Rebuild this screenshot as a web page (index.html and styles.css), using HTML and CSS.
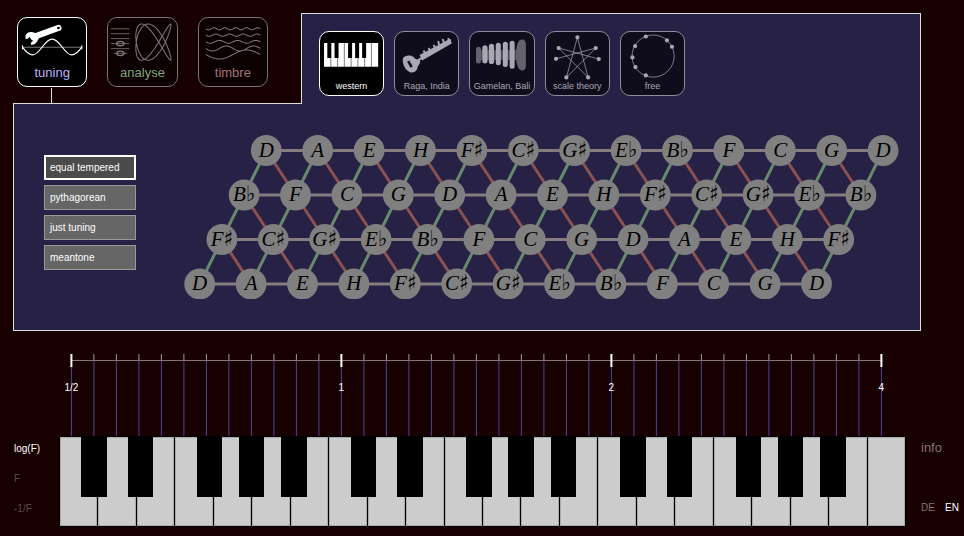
FILE: index.html
```html
<!DOCTYPE html>
<html lang="en">
<head>
<meta charset="utf-8">
<meta name="viewport" content="width=device-width, initial-scale=1">
<title>tuning</title>
<link rel="stylesheet" href="styles.css">
</head>
<body>
<main class="panel">
  <header class="panel-head">
    <nav class="modes">
      <button type="button" class="tile tile-tuning is-active">
        <svg viewBox="1 1 68 68" aria-hidden="true">
          <path d="M5.500 30H64.500" stroke="#777" fill="none"/>
          <path d="M5.500 28v4M64.500 28v4" stroke="#fff" fill="none"/>
          <path d="M5.500 30C9 35 12 37.700 15.700 37.700C23 37.700 27 22 35 22C43 22 47 37.700 54.300 37.700C58 37.700 61 35 64.500 30" stroke="#fff" stroke-width="1.200" fill="none"/>
          <path d="M16 20L41.300 10.900" stroke="#fff" stroke-width="6" stroke-linecap="round"/>
          <path d="M8.300 19.500C9 16 12 14.600 15 15L20 16.500L22 21C20.500 23 20 26 17 27.300L13.800 27.600L14 25.500L15.800 23.800L15.500 20.800L12.600 19.800L10.600 21.600L8.600 21.800Z" fill="#fff"/>
          <path d="M41 11l.600-.300" stroke="#000" stroke-width="2.400" stroke-linecap="round"/>
        </svg>
        <span>tuning</span>
      </button>
      <button type="button" class="tile tile-analyse">
        <svg viewBox="1 1 68 68" aria-hidden="true" fill="none" stroke="currentColor">
          <path d="M4 11.700H22.300M4 16.700H22.300M4 21.500H22.300M4 26.500H22.300M4 31.500H22.300M6.700 36.200H20.300" stroke-width=".8"/>
          <ellipse cx="13.300" cy="26.400" rx="3.600" ry="2.200" stroke-width="1.300"/>
          <ellipse cx="13.300" cy="36.200" rx="3.600" ry="2.200" stroke-width="1.300"/>
          <path id="lissajous"/>
        </svg>
        <span>analyse</span>
      </button>
      <button type="button" class="tile tile-timbre">
        <svg viewBox="1 1 68 68" aria-hidden="true" fill="none" stroke="currentColor">
          <path id="harmonics"/>
        </svg>
        <span>timbre</span>
      </button>
    </nav>
    <nav class="systems">
      <button type="button" class="tile is-active">
        <svg viewBox="1 1 63 63" aria-hidden="true">
          <path d="M5 12H59V35.700H5Z" fill="#fff"/>
          <path d="M11.750 27v9M18.500 27v9M25.250 12v24M32 27v9M38.750 27v9M45.500 27v9M52.250 12v24" stroke="#000" stroke-width=".5"/>
          <path d="M8.300 12h4v15h-4zM15.500 12h4v15h-4zM29 12h4v15h-4zM36 12h4v15h-4zM43 12h4v15h-4z"/>
        </svg>
        <span>western</span>
      </button>
      <button type="button" class="tile">
        <svg viewBox="1 1 63 63" aria-hidden="true">
          <path d="M25.500 24L53.500 9L56.500 8L57.500 12.500L28 29.500Z" fill="currentColor"/>
          <path d="M31 22.500l-1.500-3M36 20l-1.500-3M41 17l-1.500-3M45 14l-1-4M50 12l-1.500-4M55 10l-1-3" stroke="currentColor" stroke-width="2"/>
          <path d="M9 27C11 24 17 23.500 20 26.500C21.500 28.500 23 28.500 25.500 28.500C27 31 25 34 23.500 36C23.500 40 19 43 15 40.500C10 38 8 31 9 27Z" fill="currentColor"/>
          <path d="M24 29L30 25.500" stroke="currentColor" stroke-width="2"/>
          <path d="M14.200 30l3.400 6" stroke="#0f0d1c" stroke-width="2.600"/>
        </svg>
        <span>Raga, India</span>
      </button>
      <button type="button" class="tile">
        <svg viewBox="1 1 63 63" aria-hidden="true" fill="currentColor">
          <path d="M10 19H50V29H10Z" opacity=".4"/>
          <rect x="7" y="15.700" width="5" height="16.600" rx="2.500" fill="#65616d"/>
          <rect x="13.300" y="14.300" width="5.200" height="18" rx="2.600"/>
          <rect x="19.800" y="12.700" width="5.200" height="20.300" rx="2.600"/>
          <rect x="26.700" y="11.700" width="5" height="22.500" rx="2.500"/>
          <rect x="33.700" y="10.700" width="5" height="25.300" rx="2.500"/>
          <rect x="40.500" y="9.700" width="5" height="28" rx="2.500"/>
          <path d="M47 19C48 12 49 9 53 8.500C56 8.500 56.700 11 56.700 14V34C56.700 37 56 39.500 53 39.500C49 39 48 35 47 29Z" fill="#65616d"/>
        </svg>
        <span>Gamelan, Bali</span>
      </button>
      <button type="button" class="tile">
        <svg viewBox="1 1 63 63" aria-hidden="true">
          <path d="M21.300 46.300L32.300 6.300L43 46.300L13.600 17L53.600 28M11 27.700L50.600 17L21.300 46.300" stroke="currentColor" stroke-width=".7" fill="none"/>
          <path d="M32.300 6.300h0M50.600 17h0M53.600 28h0M43 46.300h0M21.300 46.300h0M11 27.700h0M13.600 17h0" stroke="currentColor" stroke-width="4.200" stroke-linecap="round"/>
        </svg>
        <span>scale theory</span>
      </button>
      <button type="button" class="tile">
        <svg viewBox="1 1 63 63" aria-hidden="true">
          <circle cx="33" cy="25" r="21" stroke="currentColor" stroke-width=".7" fill="none"/>
          <path d="M25.800 5.500h0M46.800 9.300h0M51.800 15.700h0M15.100 15h0M12.400 26.300h0M15.400 36h0M25.800 44.300h0" stroke="currentColor" stroke-width="4.200" stroke-linecap="round"/>
        </svg>
        <span>free</span>
      </button>
    </nav>
  </header>
  <section class="panel-body">
    <div class="temperaments">
      <button type="button" class="is-active">equal tempered</button>
      <button type="button">pythagorean</button>
      <button type="button">just tuning</button>
      <button type="button">meantone</button>
    </div>
    <svg class="tonnetz" id="tonnetz" viewBox="0 0 715 164" role="img" aria-label="Tone network"></svg>
  </section>
</main>
<section class="stage">
  <svg class="ruler" id="ruler" viewBox="0 0 847 82" role="img" aria-label="Frequency ratios"></svg>
  <div class="axis-modes">
    <button type="button" class="is-active">log(F)</button>
    <button type="button">F</button>
    <button type="button">-1/F</button>
  </div>
  <div class="keyboard" id="keyboard"></div>
  <div class="meta">
    <a class="info" href="#info">info</a>
    <div class="languages">
      <a href="#de">DE</a>
      <a class="is-active" href="#en">EN</a>
    </div>
  </div>
</section>
<script src="script.js"></script>
</body>
</html>
```
FILE: styles.css
```css
* {
  box-sizing: border-box;
}

body {
  margin: 0;
  min-height: 100vh;
  background: #180000;
  color: #fff;
  font-family: "Liberation Sans", Arial, sans-serif;
  font-size: 10px;
}

button {
  margin: 0;
  padding: 0;
  border: 0;
  background: none;
  color: inherit;
  font: inherit;
  cursor: pointer;
}

a {
  color: inherit;
  text-decoration: none;
}

.panel {
  padding: 13px 43px 0 13px;
}

.panel-head {
  display: flex;
}

.modes {
  display: grid;
  grid-template-columns: repeat(3, 1fr);
  align-items: start;
  gap: 20px;
  width: 288px;
  padding: 4px 33px 0 4px;
  border-bottom: 1px solid #ddd;
}

.systems {
  flex: 1;
  display: grid;
  grid-template-columns: repeat(5, minmax(0, 73px));
  align-items: start;
  gap: 10px;
  padding: 17px 235px 8px 17px;
  border: 1px solid #ddd;
  border-bottom: 0;
  background: #262145;
}

.tile {
  display: grid;
  position: relative;
  aspect-ratio: 1;
  border: 1px solid #7d7077;
  border-radius: 10px;
  background: #0c0000;
  color: #857777;
}

.tile > * {
  grid-area: 1 / 1;
}

.tile > svg {
  width: 100%;
  height: 100%;
}

.tile > span {
  align-self: end;
  text-align: center;
  white-space: nowrap;
}

.modes .tile {
  font-size: 13px;
}

.modes .tile > span {
  line-height: 14px;
  padding-bottom: 6px;
}

.tile-tuning > span {
  color: #b9b3ff;
}

.tile-analyse > span {
  color: #7fa57b;
}

.tile-timbre > span {
  color: #a57575;
}

.systems .tile {
  border-color: #8f8c9b;
  background: #0f0d1c;
  color: #aaa7b5;
  font-size: 9px;
}

.systems .tile > span {
  line-height: 10px;
  padding-bottom: 4px;
}

.modes .is-active,
.systems .is-active {
  border-color: #fff;
  background: #000;
  color: #fff;
}

.modes .is-active::after {
  content: "";
  position: absolute;
  top: calc(100% + 2px);
  left: calc(50% - 1px);
  width: 1px;
  height: 15px;
  background: #ddd;
}

.panel-body {
  display: flex;
  align-items: flex-start;
  gap: 48px;
  padding: 31px 21px 31px 30px;
  border: 1px solid #ddd;
  border-top: 0;
  background: #262145;
}

.temperaments {
  display: grid;
  gap: 5px;
  width: 92px;
  padding-top: 20px;
}

.temperaments button {
  height: 25px;
  padding-left: 5px;
  border: 1px solid #999;
  background: #666;
  text-align: left;
}

.temperaments .is-active {
  padding-left: 4px;
  border: 2px solid #fff;
  background: #4b4b4b;
}

.tonnetz {
  flex: 1;
  min-width: 0;
}

.edge {
  stroke-width: 3;
}

.edge-fifth {
  stroke: #857c80;
}

.edge-major {
  stroke: #69896d;
}

.edge-minor {
  stroke: #8c5252;
}

.node {
  fill: #808080;
}

.note {
  fill: #000;
  font-family: "Liberation Serif", "Times New Roman", serif;
  font-size: 21px;
  font-style: italic;
  text-anchor: middle;
}

.accidental {
  font-family: "DejaVu Sans Condensed", "DejaVu Sans", sans-serif;
  font-size: 22px;
  font-style: normal;
}

.stage {
  display: grid;
  grid-template-columns: 46px minmax(0, 1fr) 53px;
  padding: 23px 5px 0 13px;
}

.ruler {
  grid-column: 2;
  width: 100%;
}

.ruler-axis {
  stroke: #857777;
}

.ruler-line {
  stroke: #50429c;
}

.ruler-tick {
  stroke: #a89a98;
}

.ruler-octave {
  stroke: #fff;
  stroke-width: 2;
}

.ruler-label {
  fill: #fff;
  font-size: 10px;
  text-anchor: middle;
}

.axis-modes {
  grid-column: 1;
  display: flex;
  flex-direction: column;
  align-items: flex-start;
  gap: 6px;
  padding-left: 1px;
  color: #5a4d4d;
}

.axis-modes button {
  height: 24px;
}

.axis-modes .is-active,
.languages .is-active {
  color: #fff;
}

.keyboard {
  position: relative;
  display: flex;
  gap: 1px;
  height: 91px;
  padding: 1px;
  background: #000;
}

.white-key {
  flex: 1;
  border: 1px solid #aaa;
  background: #ccc;
}

.black-key {
  position: absolute;
  top: 0;
  width: 3%;
  height: 61px;
  background: #000;
}

.meta {
  display: flex;
  flex-direction: column;
  justify-content: space-between;
  height: 84px;
  padding-left: 15px;
  color: #857777;
}

.info {
  font-size: 13px;
  line-height: 24px;
}

.languages {
  display: flex;
  justify-content: space-between;
  line-height: 24px;
}
```
FILE: script.js
```js
const SVG_NS = "http://www.w3.org/2000/svg";

function draw(parent, tag, attributes, text) {
  const element = document.createElementNS(SVG_NS, tag);
  for (const [name, value] of Object.entries(attributes)) {
    element.setAttribute(name, value);
  }
  if (text) element.textContent = text;
  parent.appendChild(element);
  return element;
}

function line(parent, className, x1, y1, x2, y2) {
  draw(parent, "line", { class: className, x1, y1, x2, y2 });
}

function curve(steps, point) {
  let d = "";
  for (let i = 0; i <= steps; i++) {
    const [x, y] = point(i / steps);
    d += (i ? "L" : "M") + x.toFixed(2) + " " + y.toFixed(2);
  }
  return d;
}

/* Icon curves */
document.getElementById("lissajous").setAttribute("d", curve(160, (u) => {
  const t = u * 2 * Math.PI;
  return [46.2 + 17.5 * Math.cos(2 * t + 0.22), 25 + 18 * Math.cos(3 * t)];
}));

const partials = [[5, 11.7, 1], [4, 18, 1.2], [3, 24.7, 1.4], [2, 31.3, 2.5], [1, 37.3, 4.5]];
document.getElementById("harmonics").setAttribute("d", partials.map(([cycles, y, size]) =>
  curve(80, (u) => [7.7 + 54.3 * u, y + size * Math.sin(2 * Math.PI * cycles * u)])
).join(""));

/* Tone network: fifths run along a row, thirds between rows */
const rows = [
  "D A E H F♯ C♯ G♯ E♭ B♭ F C G D",
  "B♭ F C G D A E H F♯ C♯ G♯ E♭ B♭",
  "F♯ C♯ G♯ E♭ B♭ F C G D A E H F♯",
  "D A E H F♯ C♯ G♯ E♭ B♭ F C G D"
].map((row) => row.split(" "));
const tonnetz = document.getElementById("tonnetz");
const nodeX = (row, i) => 82.3 - row * 22.2 + i * 51.4;
const nodeY = (row) => 15.5 + row * 44.5;

rows.forEach((names, row) => {
  line(tonnetz, "edge edge-fifth", nodeX(row, 0), nodeY(row), nodeX(row, names.length - 1), nodeY(row));
  if (row === rows.length - 1) return;
  names.forEach((name, i) => {
    line(tonnetz, "edge edge-major", nodeX(row, i), nodeY(row), nodeX(row + 1, i), nodeY(row + 1));
    if (i < names.length - 1) {
      line(tonnetz, "edge edge-minor", nodeX(row, i), nodeY(row), nodeX(row + 1, i + 1), nodeY(row + 1));
    }
  });
});

rows.forEach((names, row) => names.forEach((name, i) => {
  const x = nodeX(row, i);
  const y = nodeY(row);
  draw(tonnetz, "circle", { class: "node", cx: x, cy: y, r: 15.4 });
  const label = draw(tonnetz, "text", { class: "note", x, y: y + 6 }, name[0]);
  if (name[1]) draw(label, "tspan", { class: "accidental" }, name[1]);
}));

/* Ruler: one line per semitone over three octaves */
const ruler = document.getElementById("ruler");
const semitoneX = (n) => 12.4 + n * 22.5;
const octaves = ["1/2", "1", "2", "4"];

for (let n = 0; n <= 36; n++) {
  const x = semitoneX(n);
  line(ruler, "ruler-line", x, 7, x, 82);
  line(ruler, "ruler-tick", x, 0, x, 7);
}
line(ruler, "ruler-axis", semitoneX(0), 6.5, semitoneX(36), 6.5);
octaves.forEach((name, i) => {
  const x = semitoneX(i * 12);
  line(ruler, "ruler-octave", x, 0, x, 13);
  draw(ruler, "text", { class: "ruler-label", x, y: 37 }, name);
});

/* Keyboard: 22 white keys, five black keys per octave */
const keyboard = document.getElementById("keyboard");
const noteNames = ["C", "D", "E", "F", "G", "A", "H"];
const blackKeys = [["C♯", 2.65], ["E♭", 8.1], ["F♯", 16.25], ["G♯", 21.25], ["B♭", 26.25]];

function addKey(className, label) {
  const key = document.createElement("button");
  key.type = "button";
  key.className = className;
  key.setAttribute("aria-label", label);
  keyboard.appendChild(key);
  return key;
}

for (let i = 0; i < 22; i++) addKey("white-key", noteNames[i % 7]);
for (let octave = 0; octave < 3; octave++) {
  for (const [name, offset] of blackKeys) {
    addKey("black-key", name).style.left = `${offset + octave * 700 / 22}%`;
  }
}
```
